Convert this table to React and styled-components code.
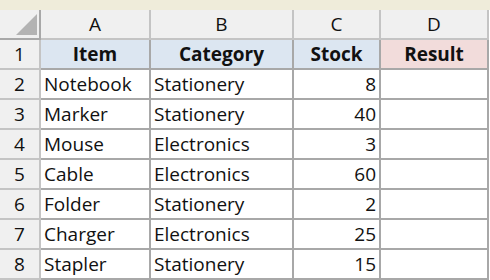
import React from 'react';
import styled, { createGlobalStyle } from "styled-components"

const Global = createGlobalStyle`
body{
    margin:0;
    background:#ffffff;
    font-family:"Open Sans", "Noto Sans", sans-serif;
}
`

const TopStrip = styled.div`
height:10px;
background:#efecda;
`

const Sheet = styled.div`
display:grid;
grid-template-columns:41px 110px 143px 87px 108px;
grid-auto-rows:30px;
`

const Cell = styled.div`
box-sizing:border-box;
border-right:2px solid ${p => p.$head ? "#c4c4c4" : "#a8a8a8"};
border-bottom:2px solid ${p => p.$head ? "#c4c4c4" : "#a8a8a8"};
background:${p => p.$bg || "#ffffff"};
display:flex;
align-items:center;
justify-content:${p => p.$align || "flex-start"};
padding:0 3px 0 3px;
font-size:19px;
font-weight:${p => p.$bold ? 700 : 400};
color:#111;
white-space:nowrap;
overflow:hidden;
`

const Corner = styled(Cell)`
align-items:flex-end;
justify-content:flex-end;
padding:0 1px 2px 0;
border-right-color:#a8a8a8;
border-bottom-color:#a8a8a8;
`

const rows = [
    ["Notebook", "Stationery", 8],
    ["Marker", "Stationery", 40],
    ["Mouse", "Electronics", 3],
    ["Cable", "Electronics", 60],
    ["Folder", "Stationery", 2],
    ["Charger", "Electronics", 25],
    ["Stapler", "Stationery", 15],
]

function App() {
    return (
        <>
            <Global />
            <TopStrip />
            <Sheet>
                <Corner $head $bg="#f0f0f0">
                    <svg width="22" height="22" viewBox="0 0 22 22">
                        <polygon points="21,0 21,21 0,21" fill="#b3b3b3" />
                    </svg>
                </Corner>
                {["A", "B", "C", "D"].map(l => (
                    <Cell key={l} $head $bg="#f0f0f0" $align="center">{l}</Cell>
                ))}

                <Cell $head $bg="#f0f0f0" $align="center">1</Cell>
                <Cell $bg="#dce6f1" $bold $align="center">Item</Cell>
                <Cell $bg="#dce6f1" $bold $align="center">Category</Cell>
                <Cell $bg="#dce6f1" $bold $align="center">Stock</Cell>
                <Cell $bg="#f2dcdb" $bold $align="center">Result</Cell>

                {rows.map((r, i) => (
                    <React.Fragment key={r[0]}>
                        <Cell $head $bg="#f0f0f0" $align="center">{i + 2}</Cell>
                        <Cell>{r[0]}</Cell>
                        <Cell>{r[1]}</Cell>
                        <Cell $align="flex-end">{r[2]}</Cell>
                        <Cell />
                    </React.Fragment>
                ))}
            </Sheet>
        </>
    )
}

export default App;
